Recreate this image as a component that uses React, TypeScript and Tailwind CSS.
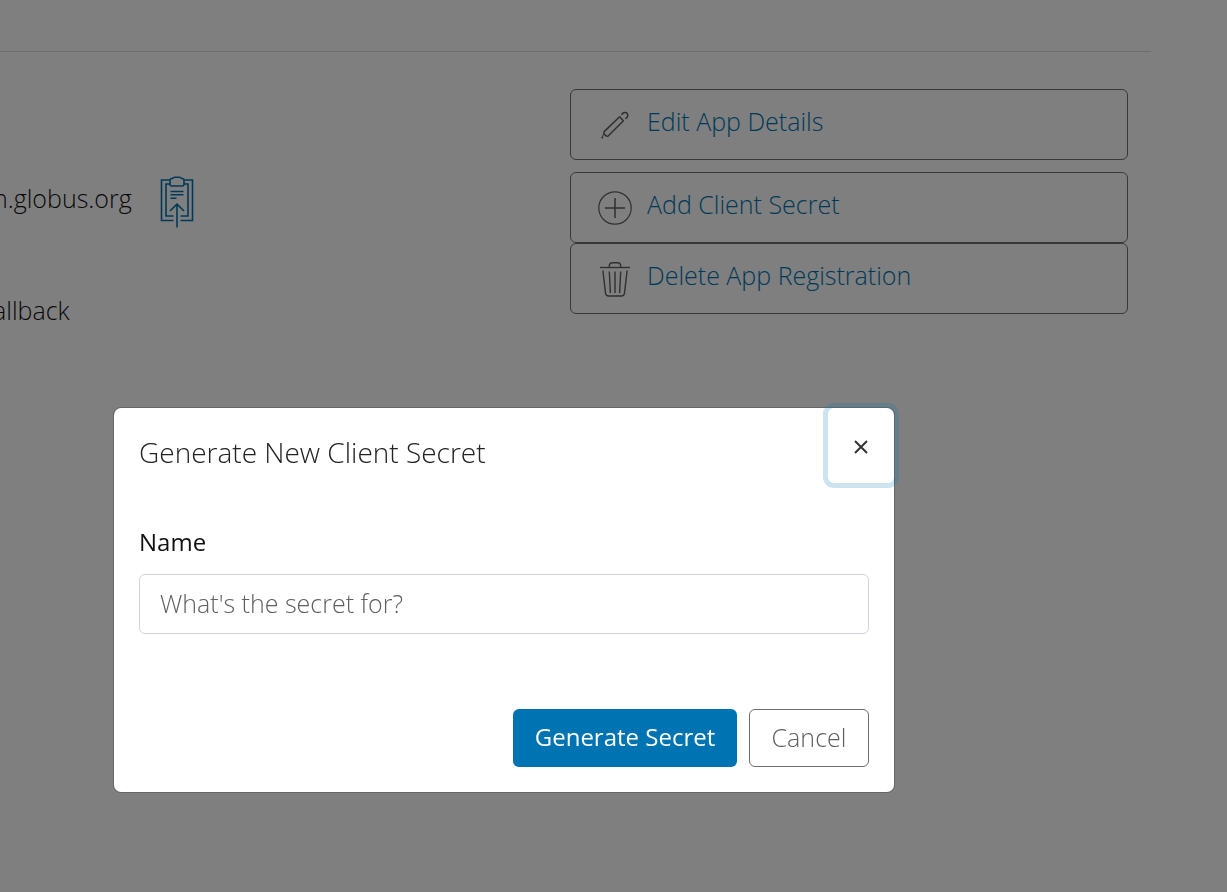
import React, { useState } from "react";

type IconProps = { className?: string };

function PencilIcon({ className }: IconProps) {
  return (
    <svg viewBox="0 0 34 34" className={className} fill="none" stroke="currentColor" strokeWidth="1.5" strokeLinejoin="round" aria-hidden="true">
      <path d="M21.6 8.8 25.4 12.8 10.4 27.8Q9 28.800 7.600 27.400L6.200 26Q5.200 24.600 6.400 23.400Z" />
      <path d="M5.600 26 4.400 29.200" strokeWidth="1" />
      <path d="M23.400 6.800Q26.400 3 29.200 5.400 31 8.200 27.400 10.800" />
      <path d="M3.400 29.700H5.200" strokeWidth="1.600" />
    </svg>
  );
}

function PlusCircleIcon({ className }: IconProps) {
  return (
    <svg viewBox="0 0 34 34" className={className} fill="none" stroke="currentColor" strokeWidth="1.2" aria-hidden="true">
      <circle cx="17" cy="17" r="16.2" />
      <path d="M17 7v20M7 17h20" strokeWidth="1.5" />
    </svg>
  );
}

function TrashIcon({ className }: IconProps) {
  return (
    <svg viewBox="0 0 34 34" className={className} fill="none" stroke="currentColor" strokeWidth="1.4" aria-hidden="true">
      <path d="M2 5.500H32" />
      <path d="M11.300 5.500V4Q11.300 .8 14.500 .8H19.500Q22.700 .8 22.700 4V5.500" />
      <path d="M4.900 8.500 7.500 31.200Q7.900 34 10.500 34H23.500Q26.100 34 26.500 31.200L29.100 8.500" />
      <path d="M11.300 9.500 12.400 31M17 9.500V31M22.700 9.500 21.600 31" />
    </svg>
  );
}

function ClipboardIcon({ className }: IconProps) {
  return (
    <svg viewBox="0 0 34 52" className={className} fill="none" stroke="currentColor" strokeWidth="1.6" aria-hidden="true">
      <path d="M10 4H1.500V44.500H13.500M24 4H32.500V44.500H20.500" />
      <path d="M10 8H6V40H13.500M24 8H28V40H20.500" />
      <path d="M11.500 2.500H12.500Q13 1.200 15 1.200H19Q21 1.200 21.500 2.500H22.500Q24 2.700 24 4.500V8.500Q24 10 22.400 10H11.600Q10 10 10 8.500V4.500Q10 2.700 11.500 2.500Z" />
      <path d="M10.500 15.500H23.500M10.500 18.700H23.500M10.500 22.200H16.500" />
      <path d="M17 51.500V28.500M10 35 17 28.200 24 35" />
    </svg>
  );
}

function CloseIcon({ className }: IconProps) {
  return (
    <svg viewBox="0 0 14 14" className={className} fill="none" stroke="currentColor" strokeWidth="2" aria-hidden="true">
      <path d="M1 1 13 13M13 1 1 13" />
    </svg>
  );
}

type ActionProps = { label: string; icon: React.ReactNode };

function ActionLink({ label, icon }: ActionProps) {
  return (
    <a href="#" className="flex h-[71px] items-center gap-[15px] rounded-md border border-[#707070] px-[27px] text-[#0074b2]">
      <span className="text-[#606060]">{icon}</span>
      <span className="pb-2">{label}</span>
    </a>
  );
}

export default function App() {
  const [open, setOpen] = useState(true);
  const [name, setName] = useState("");

  return (
    <div className="min-h-screen overflow-x-hidden bg-white font-['Open_Sans',sans-serif] text-[25px] leading-8 font-light text-[#111]">
      <header className="mr-[76px] h-[52px] border-b border-[#dedede]" />
      <main className="flex justify-between pr-[99px] pt-[37px]">
        <section className="-ml-[7px] pt-[87px]">
          <div className="flex items-center gap-7">
            <span className="pb-2">n.globus.org</span>
            <button type="button" aria-label="Copy" className="text-[#0074b2]">
              <ClipboardIcon className="h-[52px] w-[34px]" />
            </button>
          </div>
          <p className="pt-[66px]">allback</p>
        </section>
        <nav className="w-[558px]">
          <ActionLink label="Edit App Details" icon={<PencilIcon className="size-[34px]" />} />
          <div className="mt-3">
            <ActionLink label="Add Client Secret" icon={<PlusCircleIcon className="size-[34px]" />} />
            <ActionLink label="Delete App Registration" icon={<TrashIcon className="size-[34px] overflow-visible" />} />
          </div>
        </nav>
      </main>

      {open && (
        <div className="fixed inset-0 overflow-auto bg-black/50 pl-[113px] pt-[407px]">
          <div role="dialog" aria-modal="true" aria-labelledby="dialog-title" className="w-full max-w-[782px] rounded-lg border border-black/20 bg-white bg-clip-padding">
            <div className="flex items-start justify-between pl-[25px]">
              <h1 id="dialog-title" className="pt-6 text-[28px] leading-10 font-light text-[#222]">Generate New Client Secret</h1>
              <button
                type="button"
                aria-label="Close"
                onClick={() => setOpen(false)}
                className="flex h-[75px] w-[66px] items-center justify-center rounded-md pt-0.5 text-[#333] shadow-[0_0_0_5px_rgba(0,116,178,0.2)] outline-none"
              >
                <CloseIcon className="size-[14px]" />
              </button>
            </div>
            <form onSubmit={(e) => e.preventDefault()} className="px-[25px] pb-[25px] pt-[41px]">
              <label htmlFor="secret-name" className="block text-2xl leading-9 font-normal text-[#111]">Name</label>
              <input
                id="secret-name"
                type="text"
                value={name}
                onChange={(e) => setName(e.target.value)}
                placeholder="What's the secret for?"
                className="mt-[14px] h-[60px] w-full rounded-md border border-[#ced4da] px-5 pb-0.5 outline-none placeholder:text-[#606060]"
              />
              <div className="mt-[75px] flex justify-end gap-3">
                <button type="submit" className="h-[58px] w-56 rounded-md bg-[#0074b2] pb-0.5 text-2xl font-normal text-white">Generate Secret</button>
                <button type="button" onClick={() => setOpen(false)} className="h-[58px] w-[120px] rounded-md border border-[#6c6c6c] pb-0.5 text-[#606060]">Cancel</button>
              </div>
            </form>
          </div>
        </div>
      )}
    </div>
  );
}
